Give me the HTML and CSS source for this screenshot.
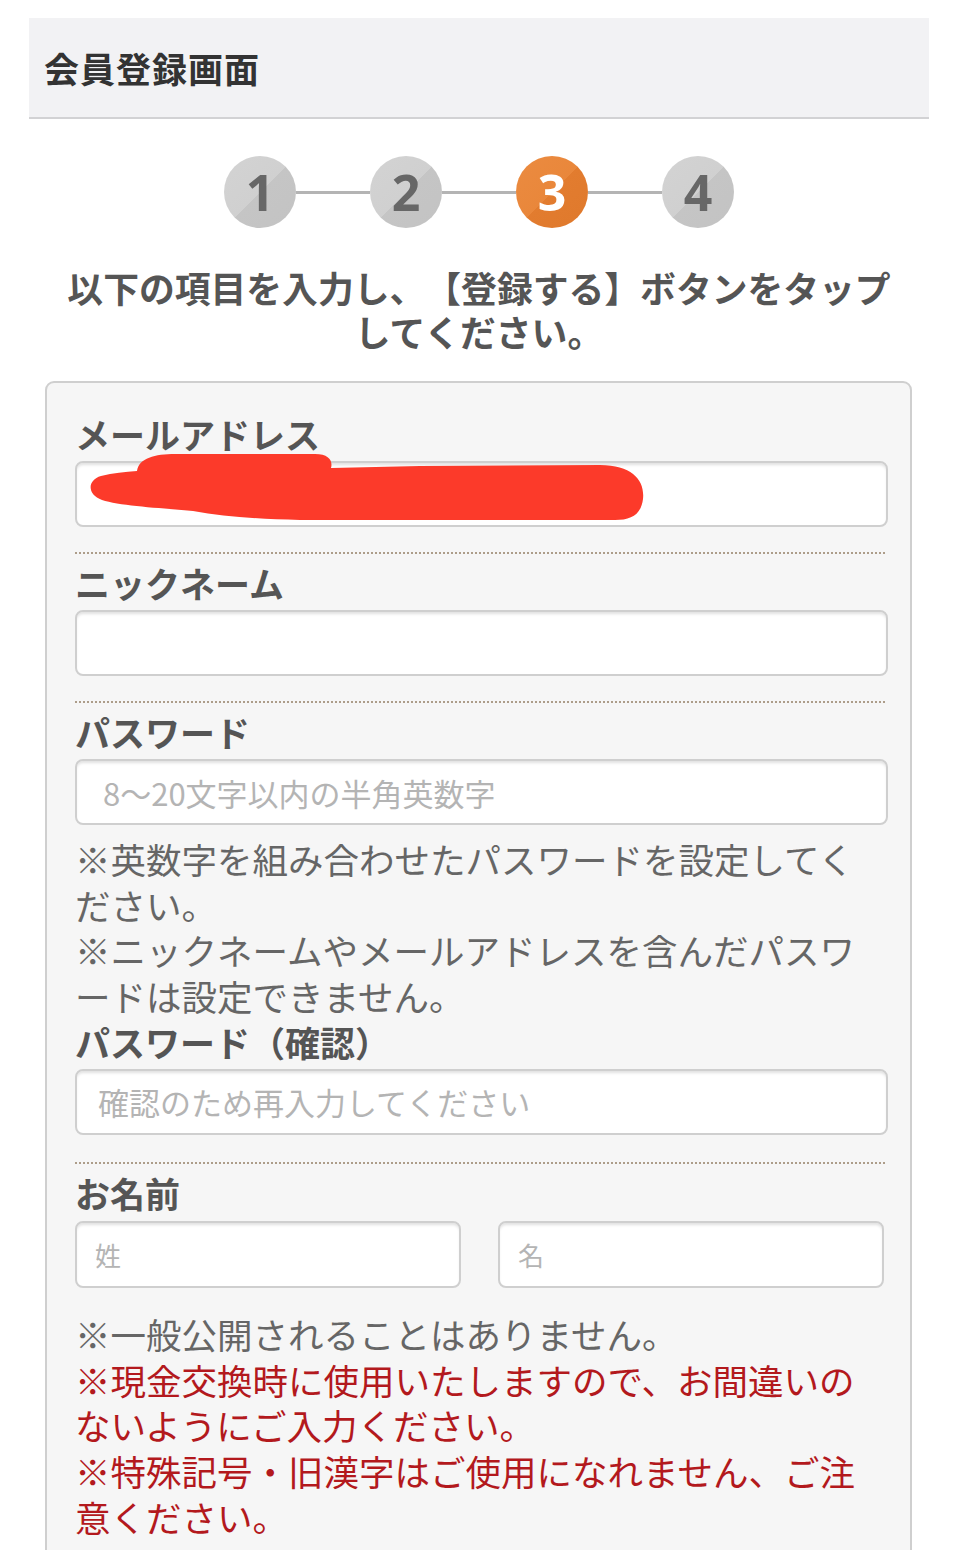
FILE: index.html
```html
<!DOCTYPE html>
<html lang="ja">
<head>
<meta charset="utf-8">
<title>会員登録画面</title>
<link rel="stylesheet" href="styles.css">
</head>
<body>
<div class="page">
  <header class="header"><h1 class="title">会員登録画面</h1></header>

  <div class="steps">
    <div class="step">1</div>
    <div class="connector"></div>
    <div class="step">2</div>
    <div class="connector"></div>
    <div class="step step-active">3</div>
    <div class="connector"></div>
    <div class="step">4</div>
  </div>

  <p class="lead">以下の項目を入力し、【登録する】ボタンをタップ<br>してください。</p>

  <form class="card">
    <div class="field">
      <label class="label">メールアドレス</label>
      <div class="input-wrap">
        <input class="input" type="text">
        <svg class="redact" width="600" height="80" viewBox="0 -10 600 80" aria-hidden="true">
          <path d="M 62 10 C 64 -3 80 -7 100 -7 L 240 -7 C 254 -7 258 0 256 7 L 345 5 L 525 4 C 558 4 570 20 568 38 C 566 54 556 59 540 59 L 225 59 C 185 58 150 56 118 50 C 86 47 45 45 27 39 C 12 34 12 19 26 15 C 38 12 50 11 62 10 Z" fill="#fc3a2a"/>
        </svg>
      </div>
    </div>
    <div class="sep"></div>

    <div class="field">
      <label class="label">ニックネーム</label>
      <input class="input" type="text">
    </div>
    <div class="sep"></div>

    <div class="field">
      <label class="label">パスワード</label>
      <input class="input input-pw" type="password" placeholder="8～20文字以内の半角英数字">
      <p class="note">※英数字を組み合わせたパスワードを設定してください。<br>※ニックネームやメールアドレスを含んだパスワードは設定できません。</p>
      <label class="label">パスワード（確認）</label>
      <input class="input input-pw2" type="password" placeholder="確認のため再入力してください">
    </div>
    <div class="sep sep-name"></div>

    <div class="field">
      <label class="label">お名前</label>
      <div class="name-row">
        <input class="input input-name" type="text" placeholder="姓">
        <input class="input input-name" type="text" placeholder="名">
      </div>
      <p class="note note-names">※一般公開されることはありません。<br><span class="warn">※現金交換時に使用いたしますので、お間違いのないようにご入力ください。<br>※特殊記号・旧漢字はご使用になれません、ご注意ください。</span></p>
    </div>
  </form>
</div>
</body>
</html>
```
FILE: styles.css
```css
* { box-sizing: border-box; }
html, body { margin: 0; padding: 0; background: #fff; }
body {
  font-family: "Noto Sans CJK JP", "Noto Sans", sans-serif;
  color: #555;
  overflow: hidden;
  text-spacing-trim: space-all;
}
.page {
  margin: 18px 24px 0 29px;
}
.header {
  height: 101px;
  background: #f2f2f4;
  border-bottom: 2px solid #d2d2d4;
  display: flex;
  align-items: center;
  padding-left: 15px;
}
.title {
  margin: 0;
  font-size: 35px;
  line-height: 1;
  font-weight: 700;
  color: #333;
  letter-spacing: 1px;
}
.steps {
  margin-top: 37px;
  display: flex;
  align-items: center;
  justify-content: center;
}
.step {
  width: 72px;
  height: 72px;
  border-radius: 50%;
  background: linear-gradient(135deg, #d3d3d3 0%, #d0d0d0 50%, #c5c5c5 50%, #c3c3c3 100%);
  color: #676767;
  font-family: "Open Sans", "Noto Sans", sans-serif;
  font-weight: 700;
  font-size: 50px;
  line-height: 72px;
  text-align: center;
}
.step-active {
  background: linear-gradient(135deg, #eb8b40 0%, #e9873b 50%, #e27c2f 50%, #df792c 100%);
  color: #fff;
}
.connector {
  width: 74px;
  height: 3px;
  background: #b4b4b4;
}
.lead {
  margin: 37px 0 0;
  text-align: center;
  font-size: 35.8px;
  line-height: 44px;
  font-weight: 700;
  color: #555;
}
.card {
  margin: 28px 17px 0 16px;
  background: #f6f6f6;
  border: 2px solid #cfcfcf;
  border-radius: 9px;
  padding: 28px 22px 60px 28px;
}
.field { display: flex; flex-direction: column; }
.label {
  display: block;
  font-size: 35px;
  line-height: 46px;
  font-weight: 700;
  color: #555;
  margin-bottom: 4px;
}
.input-wrap { position: relative; }
.input {
  display: block;
  width: 100%;
  height: 66px;
  border: 2px solid #cfcfcf;
  border-radius: 8px;
  background: #fff;
  box-shadow: inset 0 3px 3px -1px rgba(0, 0, 0, 0.12);
  font-family: "Noto Sans CJK JP", "Noto Sans", sans-serif;
  font-size: 31px;
  color: #444;
  padding: 0 20px;
  outline: none;
}
.input::placeholder { color: #b4b4b4; }
.input-pw { padding-left: 26px; }
.input-pw2 { padding-left: 21px; }
.redact {
  position: absolute;
  left: 0;
  top: -10px;
}
.sep {
  margin: 25px 3px 6px 0;
  border-top: 2px dotted #ad9d8a;
}
.sep-name { margin-top: 27px; }
.note {
  margin: 11px 12px 0 0;
  font-size: 35.5px;
  line-height: 45.7px;
  color: #666;
}
.name-row {
  display: flex;
  gap: 37px;
  padding-right: 4px;
  margin-top: 1px;
}
.input-name {
  height: 67px;
  font-size: 26px;
  padding-left: 18px;
}
.note-names { margin-top: 23px; }
.warn { color: #b3191d; }
```
